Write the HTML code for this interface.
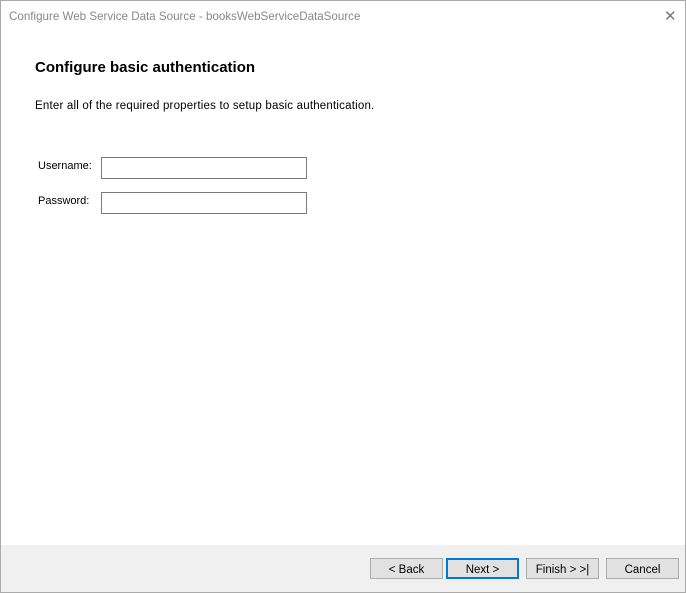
<!DOCTYPE html><html><head><style>
body{margin:0;width:686px;height:593px;overflow:hidden;font-family:"Liberation Sans",sans-serif;background:#fff}
.win{position:absolute;left:0;top:0;width:684px;height:591px;border:1px solid #aaa;background:#fff}
.t{position:absolute;left:8px;top:9px;font-size:11.6px;color:#888}
.x{position:absolute;left:663px;top:6px;font-size:15px;color:#777;font-weight:normal}
h1{position:absolute;left:34px;top:58px;margin:0;font-size:15px;font-weight:bold;color:#000}
.d{position:absolute;left:34px;top:99px;font-size:11.5px;color:#000;letter-spacing:0.2px}
.l{position:absolute;left:37px;font-size:11px}
.i{position:absolute;left:100px;width:204px;height:20px;border:1px solid #7a7a7a;background:#fff}
.f{position:absolute;left:0;top:544px;width:684px;height:47px;background:#f0f0f0}
.b{position:absolute;top:557px;width:71px;height:19px;border:1px solid #adadad;background:#e1e1e1;font-size:11.5px;text-align:center;line-height:22px}
</style></head><body><div class="win">
<div class="t">Configure Web Service Data Source - booksWebServiceDataSource</div>
<div class="x">✕</div>
<h1>Configure basic authentication</h1>
<div class="d">Enter all of the required properties to setup basic authentication.</div>
<div class="l" style="top:159px">Username:</div><div class="i" style="top:156px"></div>
<div class="l" style="top:194px">Password:</div><div class="i" style="top:191px"></div>
<div class="f"></div>
<div class="b" style="left:369px">&lt; Back</div>
<div class="b" style="left:445px;border:2px solid #0078d7;width:69px;height:17px;line-height:20px">Next &gt;</div>
<div class="b" style="left:525px">Finish &gt; &gt;|</div>
<div class="b" style="left:605px">Cancel</div>
</div></body></html>
